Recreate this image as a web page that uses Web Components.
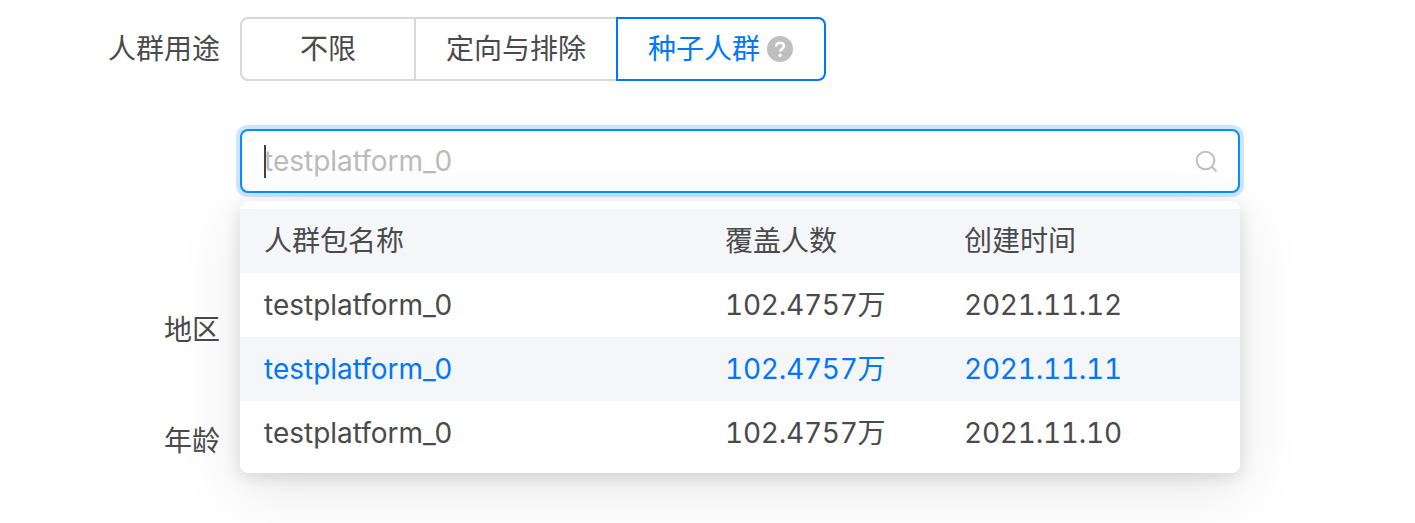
<!DOCTYPE html>
<html lang="zh-CN">
<head>
<meta charset="utf-8">
<title>人群用途</title>
<style>
	html, body {
		margin: 0;
		background: #fff;
	}

	body {
		height: 523px;
		overflow: hidden;
		font: 28px/40px Inter, "Noto Sans CJK SC", sans-serif;
		color: #4a4a4a;
	}
</style>
</head>
<body>
	<audience-form>
		<form-row label="人群用途" style="--row-top: 17px">
			<seg-group>
				<seg-button style="width: 176px">不限</seg-button>
				<seg-button>定向与排除</seg-button>
				<seg-button selected>种子人群<help-icon></help-icon></seg-button>
			</seg-group>
		</form-row>
		<form-row style="--row-top: 48px">
			<audience-select placeholder="testplatform_0">
				<audience-row header name="人群包名称" count="覆盖人数" created="创建时间"></audience-row>
				<audience-row name="testplatform_0" count="102.4757万" created="2021.11.12"></audience-row>
				<audience-row active name="testplatform_0" count="102.4757万" created="2021.11.11"></audience-row>
				<audience-row name="testplatform_0" count="102.4757万" created="2021.11.10"></audience-row>
			</audience-select>
		</form-row>
		<form-row label="地区" style="--row-top: 105px"></form-row>
		<form-row label="年龄" style="--row-top: 47px"></form-row>
	</audience-form>

	<script>
		class AudienceForm extends HTMLElement {
			constructor() {
				super();
				this.attachShadow({ mode: 'open' });
				this.shadowRoot.innerHTML = `
					<style>
						:host {
							display: flex;
							flex-direction: column;
						}
					</style>
					<slot></slot>
				`;
			}
		}

		class FormRow extends HTMLElement {
			constructor() {
				super();
				this.attachShadow({ mode: 'open' });
				this.shadowRoot.innerHTML = `
					<style>
						:host {
							display: flex;
							align-items: center;
							gap: 20px;
							height: 64px;
							margin-top: var(--row-top, 0);
						}

						.label {
							flex: 0 0 220px;
							text-align: right;
						}

						.control {
							flex: 0 0 1000px;
						}
					</style>
					<div class="label"></div>
					<div class="control"><slot></slot></div>
				`;
			}

			connectedCallback() {
				this.shadowRoot.querySelector('.label').textContent = this.getAttribute('label') || '';
			}
		}

		class SegGroup extends HTMLElement {
			constructor() {
				super();
				this.attachShadow({ mode: 'open' });
				this.shadowRoot.innerHTML = `
					<style>
						:host {
							display: flex;
							height: 64px;
						}

						::slotted(seg-button:first-child) {
							margin-left: 0;
							border-radius: 8px 0 0 8px;
						}

						::slotted(seg-button:last-child) {
							border-radius: 0 8px 8px 0;
						}
					</style>
					<slot></slot>
				`;
			}
		}

		class SegButton extends HTMLElement {
			constructor() {
				super();
				this.attachShadow({ mode: 'open' });
				this.shadowRoot.innerHTML = `
					<style>
						:host {
							box-sizing: border-box;
							display: flex;
							align-items: center;
							justify-content: center;
							gap: 7px;
							position: relative;
							margin-left: -2px;
							padding: 0 30px;
							border: 2px solid #d9d9d9;
							background: #fff;
						}

						:host([selected]) {
							z-index: 1;
							padding-right: 31px;
							border-color: #0077fa;
							color: #0077fa;
						}
					</style>
					<slot></slot>
				`;
			}
		}

		class HelpIcon extends HTMLElement {
			constructor() {
				super();
				this.attachShadow({ mode: 'open' });
				this.shadowRoot.innerHTML = `
					<style>
						:host {
							display: block;
							width: 26px;
							height: 26px;
						}

						svg {
							display: block;
						}
					</style>
					<svg width="26" height="26" viewBox="0 0 26 26" aria-hidden="true">
						<circle cx="13" cy="13" r="13" fill="#bfbfbf"/>
						<path d="M9.2 10.4c0-2.3 1.7-3.7 3.9-3.7s3.8 1.3 3.8 3.3c0 1.5-.8 2.3-2 3.1-1.1.7-1.7 1.2-1.7 2.5" fill="none" stroke="#fff" stroke-width="2.6"/>
						<circle cx="13.1" cy="19.2" r="1.7" fill="#fff"/>
					</svg>
				`;
			}
		}

		class AudienceSelect extends HTMLElement {
			constructor() {
				super();
				this.attachShadow({ mode: 'open' });
				this.shadowRoot.innerHTML = `
					<style>
						:host {
							display: block;
							position: relative;
							height: 64px;
						}

						.input {
							box-sizing: border-box;
							display: flex;
							align-items: center;
							justify-content: space-between;
							position: relative;
							height: 64px;
							padding: 0 20px 0 22px;
							border: 2px solid #0090ff;
							border-radius: 8px;
							background: #fff;
							box-shadow: 0 0 0 4px #d0e3ff;
						}

						.placeholder {
							color: #bbb;
						}

						.caret {
							position: absolute;
							left: 22px;
							top: 14px;
							width: 2px;
							height: 33px;
							background: #444;
						}

						svg {
							display: block;
						}

						.menu {
							position: absolute;
							left: 0;
							right: 0;
							top: 72px;
							padding: 8px 0;
							border-radius: 8px;
							background: #fff;
							box-shadow: 0 4px 16px rgba(0, 0, 0, .12), 0 16px 64px rgba(0, 0, 0, .1);
						}
					</style>
					<div class="input">
						<span class="caret"></span>
						<span class="placeholder"></span>
						<svg width="24" height="24" viewBox="0 0 24 24" aria-hidden="true">
							<circle cx="11.5" cy="11.5" r="8.8" fill="none" stroke="#bfbfbf" stroke-width="2"/>
							<path d="M17.8 17.8l4.7 4.7" fill="none" stroke="#bfbfbf" stroke-width="2"/>
						</svg>
					</div>
					<div class="menu"><slot></slot></div>
				`;
			}

			connectedCallback() {
				this.shadowRoot.querySelector('.placeholder').textContent = this.getAttribute('placeholder');
			}
		}

		class AudienceRow extends HTMLElement {
			constructor() {
				super();
				this.attachShadow({ mode: 'open' });
				this.shadowRoot.innerHTML = `
					<style>
						:host {
							display: grid;
							grid-template-columns: 461px 239px 1fr;
							align-items: center;
							height: 64px;
							padding-left: 24px;
						}

						:host([header]) {
							background: #f4f6fa;
						}

						:host([active]) {
							background: #f4f6fa;
							color: #0077fa;
						}

						:host(:not([header])) .count,
						:host(:not([header])) .created {
							font-variant-numeric: tabular-nums;
							letter-spacing: -.25px;
						}
					</style>
					<span class="name"></span>
					<span class="count"></span>
					<span class="created"></span>
				`;
			}

			connectedCallback() {
				for (const key of ['name', 'count', 'created']) {
					this.shadowRoot.querySelector('.' + key).textContent = this.getAttribute(key);
				}
			}
		}

		customElements.define('audience-form', AudienceForm);
		customElements.define('form-row', FormRow);
		customElements.define('seg-group', SegGroup);
		customElements.define('seg-button', SegButton);
		customElements.define('help-icon', HelpIcon);
		customElements.define('audience-select', AudienceSelect);
		customElements.define('audience-row', AudienceRow);
	</script>
</body>
</html>
